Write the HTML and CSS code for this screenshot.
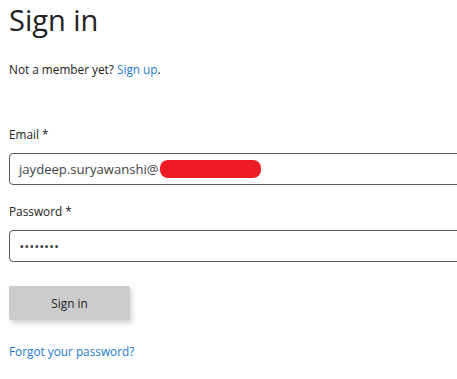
FILE: index.html
```html
<!DOCTYPE html>
<html>
<head>
<meta charset="utf-8">
<link rel="stylesheet" href="styles.css">
</head>
<body>
<div class="page">
  <h1 class="title">Sign in</h1>
  <p class="intro">Not a member yet? <a class="link" href="#">Sign up</a>.</p>
  <form class="form">
    <label class="label">Email *</label>
    <div class="input">
      <span class="value">jaydeep.suryawanshi@</span><span class="redact"></span>
    </div>
    <label class="label">Password *</label>
    <div class="input">
      <span class="dots">••••••••</span>
    </div>
    <button class="btn" type="button">Sign in</button>
    <a class="link forgot" href="#">Forgot your password?</a>
  </form>
</div>
</body>
</html>
```
FILE: styles.css
```css
html, body { margin: 0; padding: 0; background: #fff; }
body { font-family: "Open Sans", "Noto Sans", sans-serif; color: #222; overflow: hidden; }
.page { padding: 0 0 0 9px; width: 448px; overflow: hidden; }
.title { font-size: 29px; font-weight: 400; margin: 0; padding-top: 0; line-height: 40px; color: #222; }
.intro { font-size: 11.8px; margin: 20px 0 0 0; line-height: 18px; }
.link { color: #1a7acb; text-decoration: none; }
.form { display: flex; flex-direction: column; align-items: flex-start; margin-top: 47px; }
.label { font-size: 11.8px; line-height: 18px; margin-bottom: 10px; }
.input { box-sizing: border-box; width: 500px; height: 32px; border: 1px solid #5a5a5a; border-radius: 4px; display: flex; align-items: center; padding-left: 9px; margin-bottom: 17px; font-size: 13.1px; color: #444; }
.redact { display: inline-block; width: 101px; height: 18px; background: #ed1c24; border-radius: 8px; margin-left: 1px; }
.dots { font-size: 9.5px; letter-spacing: 1.4px; color: #3a3a3a; padding-left: 1px; font-weight: 700; }
.btn { margin-top: 7px; width: 121px; height: 34px; background: #cccccc; border: none; border-radius: 2px; box-shadow: 2px 3px 5px rgba(0,0,0,0.18); font-family: inherit; font-size: 11.8px; color: #222; padding: 0; }
.forgot { margin-top: 22px; font-size: 11.8px; line-height: 18px; }
```
